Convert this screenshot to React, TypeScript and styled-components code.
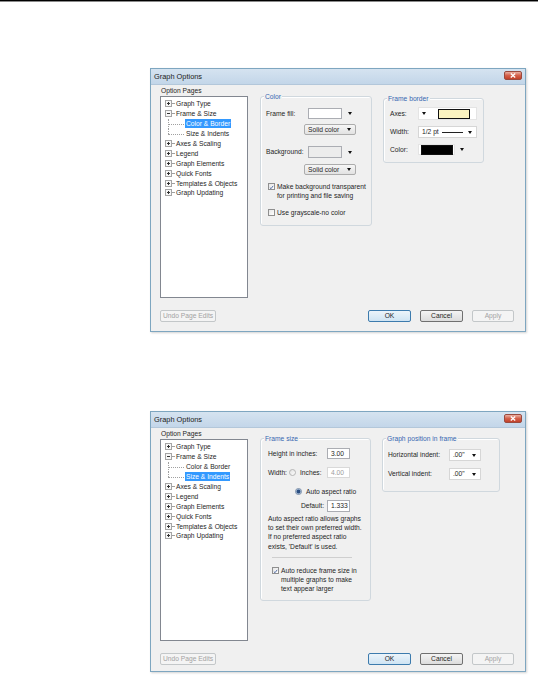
import React from "react";
import styled, { createGlobalStyle } from "styled-components";

const GlobalStyle = createGlobalStyle`
  html, body { margin: 0; padding: 0; background: #fff; }
  body { font-family: "Liberation Sans", Arial, sans-serif; }
  * { box-sizing: border-box; }
`;

const Page = styled.div`
  width: 538px;
  height: 675px;
  overflow: hidden;
`;

const TopRule = styled.div`
  height: 2px;
  border-top: 1px solid #000;
  border-bottom: 1px solid #8a8a8a;
`;

const Window = styled.div<{ $top: number; $height: number }>`
  margin: ${(p) => p.$top}px 0 0 150px;
  width: 376px;
  height: ${(p) => p.$height}px;
  display: flex;
  flex-direction: column;
  border: 1px solid #7ea6c0;
  background: #f0f0f0;
  box-shadow: 1px 1px 2px rgba(0, 0, 0, 0.18);
  font-size: 6.7px;
  line-height: 9.4px;
  color: #1e1e1e;
`;

const TitleBar = styled.div`
  height: 16px;
  flex: none;
  display: flex;
  justify-content: space-between;
  padding: 0 3px 0 3px;
  background: linear-gradient(#d5e3f0, #c3d6e9);
  border-bottom: 1px solid #b3c7da;
`;

const Title = styled.span`
  font-size: 7.4px;
  line-height: 16px;
  color: #1a1a1a;
`;

const CloseBox = styled.span`
  margin-top: 2px;
  width: 18px;
  height: 9px;
  border-radius: 2px;
  border: 1px solid #9a4a3e;
  background: linear-gradient(#eab0a2, #d4604a 50%, #c2412a);
  display: flex;
  align-items: center;
  justify-content: center;
`;

const Body = styled.div`
  flex: 1;
  min-height: 0;
  display: flex;
  padding: 1px 11px 0 9px;
`;

const LeftColumn = styled.div`
  width: 88px;
  flex: none;
  display: flex;
  flex-direction: column;
`;

const PagesLabel = styled.div`
  height: 10px;
  line-height: 10px;
  padding-left: 1px;
`;

const TreeBox = styled.div`
  flex: 1;
  background: #fff;
  border: 1px solid #828790;
  padding-top: 2px;
`;

const TreeRow = styled.div`
  height: 9.9px;
  display: flex;
  align-items: center;
  white-space: nowrap;
`;

const ExpanderBox = styled.span`
  margin-left: 4px;
  width: 7px;
  height: 7px;
  flex: none;
  display: flex;
`;

const Dash = styled.span`
  width: 2px;
  height: 0;
  border-top: 1px dotted #a0a0a0;
  margin-right: 1px;
`;

const Connector = styled.span<{ $last?: boolean }>`
  position: relative;
  margin-left: 7px;
  width: 17px;
  height: 100%;
  flex: none;

  &::before {
    content: "";
    position: absolute;
    left: 0;
    top: 0;
    height: ${(p) => (p.$last ? "50%" : "100%")};
    border-left: 1px dotted #a0a0a0;
  }

  &::after {
    content: "";
    position: absolute;
    left: 0;
    right: 1px;
    top: 50%;
    border-top: 1px dotted #a0a0a0;
  }
`;

const TreeLabel = styled.span<{ $selected?: boolean }>`
  padding: 0 1px;
  line-height: 9px;
  background: ${(p) => (p.$selected ? "#3399ff" : "transparent")};
  color: ${(p) => (p.$selected ? "#fff" : "#1e1e1e")};
`;

const RightArea = styled.div`
  flex: 1;
  display: flex;
  align-items: flex-start;
  gap: 11px;
  margin-left: 12px;
`;

const Group = styled.div<{ $top: number; $w: number; $h: number; $pad: number }>`
  position: relative;
  margin-top: ${(p) => p.$top}px;
  width: ${(p) => p.$w}px;
  height: ${(p) => p.$h}px;
  flex: none;
  border: 1px solid #d0d8de;
  border-radius: 3px;
  padding-left: ${(p) => p.$pad}px;
  box-shadow: inset 1px 1px 0 #fff;
`;

const Legend = styled.span`
  position: absolute;
  top: -5px;
  left: 3px;
  padding: 0 1px;
  background: #f0f0f0;
  color: #3767b0;
  line-height: 9px;
`;

const Row = styled.div<{ $mt: number; $h?: number }>`
  display: flex;
  align-items: center;
  margin-top: ${(p) => p.$mt}px;
  height: ${(p) => (p.$h ? `${p.$h}px` : "auto")};
  white-space: nowrap;
`;

const Label = styled.span<{ $w?: number; $right?: boolean }>`
  width: ${(p) => (p.$w ? `${p.$w}px` : "auto")};
  flex: none;
  text-align: ${(p) => (p.$right ? "right" : "left")};
  padding-right: ${(p) => (p.$right ? "3px" : "0")};
`;

const Swatch = styled.span<{ $w: number; $h: number; $bg: string }>`
  width: ${(p) => p.$w}px;
  height: ${(p) => p.$h}px;
  flex: none;
  background: ${(p) => p.$bg};
  border: 1px solid #abadb3;
`;

const Caret = styled.span<{ $ml?: number }>`
  margin-left: ${(p) => p.$ml ?? 0}px;
  width: 0;
  height: 0;
  flex: none;
  border-left: 2.5px solid transparent;
  border-right: 2.5px solid transparent;
  border-top: 3px solid #111;
`;

const Combo = styled.span<{ $ml?: number; $w: number; $h: number; $flat?: boolean }>`
  margin-left: ${(p) => p.$ml ?? 0}px;
  width: ${(p) => p.$w}px;
  height: ${(p) => p.$h}px;
  flex: none;
  display: flex;
  align-items: center;
  justify-content: space-between;
  padding: 0 4px 0 3px;
  border: 1px solid ${(p) => (p.$flat ? "#d6d6d6" : "#acacac")};
  border-radius: ${(p) => (p.$flat ? "0" : "2px")};
  background: ${(p) => (p.$flat ? "#fff" : "linear-gradient(#f6f6f6, #e2e2e2)")};
`;

const FieldWell = styled.span<{ $w: number; $h: number }>`
  width: ${(p) => p.$w}px;
  height: ${(p) => p.$h}px;
  flex: none;
  display: flex;
  align-items: center;
  background: #fff;
  border: 1px solid #e4e4e4;
  padding-left: 2px;
`;

const ColorChip = styled.span<{ $bg: string; $ml?: number }>`
  margin-left: ${(p) => p.$ml ?? 0}px;
  width: 32px;
  height: 10px;
  flex: none;
  background: ${(p) => p.$bg};
  border: 1px solid #111;
`;

const LineSample = styled.span`
  width: 21px;
  height: 0;
  border-top: 1px solid #222;
  margin-left: 3px;
  margin-right: auto;
`;

const TextInput = styled.span<{ $w: number; $h: number; $disabled?: boolean }>`
  width: ${(p) => p.$w}px;
  height: ${(p) => p.$h}px;
  flex: none;
  display: flex;
  align-items: center;
  padding-left: 3px;
  background: #fff;
  border: 1px solid ${(p) => (p.$disabled ? "#d9d9d9" : "#abadb3")};
  color: ${(p) => (p.$disabled ? "#9d9d9d" : "#1e1e1e")};
`;

const CheckBox = styled.span<{ $ml: number }>`
  margin: 1px 2px 0 ${(p) => p.$ml}px;
  width: 7px;
  height: 7px;
  flex: none;
  display: flex;
  border: 1px solid #8f8f8f;
  background: linear-gradient(135deg, #e6e6e6, #fff);
`;

const CheckRow = styled.div<{ $mt: number }>`
  display: flex;
  align-items: flex-start;
  margin-top: ${(p) => p.$mt}px;
`;

const Radio = styled.span<{ $ml: number; $on?: boolean }>`
  margin: 0 4px 0 ${(p) => p.$ml}px;
  width: 7px;
  height: 7px;
  flex: none;
  border-radius: 50%;
  border: 1px solid ${(p) => (p.$on ? "#7a8ea8" : "#b5b5b5")};
  background: ${(p) =>
    p.$on
      ? "radial-gradient(circle, #2b4f82 0 1.6px, #9fb6d3 2.2px, #eef3f8 3px)"
      : "linear-gradient(135deg, #e3e3e3, #fbfbfb)"};
`;

const Paragraph = styled.div<{ $mt: number }>`
  margin-top: ${(p) => p.$mt}px;
  line-height: 9.2px;
`;

const Separator = styled.div`
  margin: 6px 0 0 4px;
  width: 80px;
  height: 0;
  border-top: 1px solid #cfcfcf;
`;

const Footer = styled.div<{ $pb: number }>`
  flex: none;
  display: flex;
  align-items: center;
  gap: 9px;
  padding: 12px 11px ${(p) => p.$pb}px 9px;
`;

const Button = styled.span<{ $w: number; $kind?: "default" | "disabled" | "normal" }>`
  width: ${(p) => p.$w}px;
  height: 12px;
  flex: none;
  display: flex;
  align-items: center;
  justify-content: center;
  border-radius: 2px;
  line-height: 10px;
  border: 1px solid
    ${(p) => (p.$kind === "default" ? "#3d7bad" : p.$kind === "disabled" ? "#c3c7c9" : "#707070")};
  background: ${(p) =>
    p.$kind === "default"
      ? "linear-gradient(#ecf4fa, #cfe4f3)"
      : p.$kind === "disabled"
      ? "#f4f4f4"
      : "linear-gradient(#f4f4f4, #dcdcdc)"};
  color: ${(p) => (p.$kind === "disabled" ? "#a3a3a3" : "#1e1e1e")};
`;

const Spacer = styled.span`
  flex: 1;
`;

const CloseIcon = () => (
  <svg width="6" height="5" viewBox="0 0 6 5">
    <path d="M0.8 0.5 L5.2 4.5 M5.2 0.5 L0.8 4.5" stroke="#fff" strokeWidth="1.3" />
  </svg>
);

const Expander = ({ open }: { open?: boolean }) => (
  <ExpanderBox>
    <svg width="7" height="7" viewBox="0 0 7 7">
      <rect x="0.5" y="0.5" width="6" height="6" fill="#f7f7f7" stroke="#a5a5a5" />
      <path d="M2 3.5 H5" stroke="#333" />
      {!open && <path d="M3.5 2 V5" stroke="#333" />}
    </svg>
  </ExpanderBox>
);

const Tick = () => (
  <svg width="7" height="7" viewBox="0 0 7 7">
    <path d="M1.2 3.6 L2.8 5.2 L5.8 1.2" stroke="#3d5a98" strokeWidth="1.2" fill="none" />
  </svg>
);

type TreeItem = { label: string; kind: "closed" | "open" | "child"; last?: boolean };

const treeItems: TreeItem[] = [
  { label: "Graph Type", kind: "closed" },
  { label: "Frame & Size", kind: "open" },
  { label: "Color & Border", kind: "child" },
  { label: "Size & Indents", kind: "child", last: true },
  { label: "Axes & Scaling", kind: "closed" },
  { label: "Legend", kind: "closed" },
  { label: "Graph Elements", kind: "closed" },
  { label: "Quick Fonts", kind: "closed" },
  { label: "Templates & Objects", kind: "closed" },
  { label: "Graph Updating", kind: "closed" },
];

const Dialog = ({
  top,
  height,
  pb,
  selected,
  children,
}: {
  top: number;
  height: number;
  pb: number;
  selected: string;
  children: React.ReactNode;
}) => (
  <Window $top={top} $height={height}>
    <TitleBar>
      <Title>Graph Options</Title>
      <CloseBox>
        <CloseIcon />
      </CloseBox>
    </TitleBar>
    <Body>
      <LeftColumn>
        <PagesLabel>Option Pages</PagesLabel>
        <TreeBox>
          {treeItems.map((item) => (
            <TreeRow key={item.label}>
              {item.kind === "child" ? (
                <Connector $last={item.last} />
              ) : (
                <>
                  <Expander open={item.kind === "open"} />
                  <Dash />
                </>
              )}
              <TreeLabel $selected={item.label === selected}>{item.label}</TreeLabel>
            </TreeRow>
          ))}
        </TreeBox>
      </LeftColumn>
      <RightArea>{children}</RightArea>
    </Body>
    <Footer $pb={pb}>
      <Button $w={56} $kind="disabled">Undo Page Edits</Button>
      <Spacer />
      <Button $w={43} $kind="default">OK</Button>
      <Button $w={43}>Cancel</Button>
      <Button $w={42} $kind="disabled">Apply</Button>
    </Footer>
  </Window>
);

export default function App() {
  return (
    <Page>
      <GlobalStyle />
      <TopRule />

      <Dialog top={66} height={264} pb={9} selected="Color & Border">
        <Group $top={10} $w={112} $h={130} $pad={5}>
          <Legend>Color</Legend>
          <Row $mt={11} $h={11}>
            <Label $w={42}>Frame fill:</Label>
            <Swatch $w={34} $h={11} $bg="#fff" />
            <Caret $ml={6} />
          </Row>
          <Row $mt={5} $h={11}>
            <Combo $ml={38} $w={52} $h={11}>
              Solid color
              <Caret />
            </Combo>
          </Row>
          <Row $mt={11} $h={12}>
            <Label $w={42}>Background:</Label>
            <Swatch $w={34} $h={12} $bg="#ececec" />
            <Caret $ml={6} />
          </Row>
          <Row $mt={6} $h={11}>
            <Combo $ml={38} $w={52} $h={11}>
              Solid color
              <Caret />
            </Combo>
          </Row>
          <CheckRow $mt={7}>
            <CheckBox $ml={2}>
              <Tick />
            </CheckBox>
            <span>
              Make background transparent
              <br />
              for printing and file saving
            </span>
          </CheckRow>
          <CheckRow $mt={7}>
            <CheckBox $ml={2} />
            <span>Use grayscale-no color</span>
          </CheckRow>
        </Group>

        <Group $top={12} $w={101} $h={65} $pad={6}>
          <Legend>Frame border</Legend>
          <Row $mt={8} $h={13}>
            <Label $w={28}>Axes:</Label>
            <FieldWell $w={59} $h={13}>
              <Caret $ml={1} />
              <ColorChip $bg="#fbf3c0" $ml={12} />
            </FieldWell>
          </Row>
          <Row $mt={6} $h={12}>
            <Label $w={28}>Width:</Label>
            <Combo $w={59} $h={12} $flat>
              1/2 pt
              <LineSample />
              <Caret />
            </Combo>
          </Row>
          <Row $mt={6} $h={11}>
            <Label $w={28}>Color:</Label>
            <FieldWell $w={37} $h={11}>
              <ColorChip $bg="#000" />
            </FieldWell>
            <Caret $ml={5} />
          </Row>
        </Group>
      </Dialog>

      <Dialog top={79} height={261} pb={6} selected="Size & Indents">
        <Group $top={9} $w={111} $h={163} $pad={7}>
          <Legend>Frame size</Legend>
          <Row $mt={9} $h={11}>
            <Label $w={59}>Height in inches:</Label>
            <TextInput $w={23} $h={11}>3.00</TextInput>
          </Row>
          <Row $mt={8} $h={11}>
            <Label $w={21}>Width:</Label>
            <Radio $ml={0} />
            <Label $w={27}>Inches:</Label>
            <TextInput $w={23} $h={11} $disabled>
              4.00
            </TextInput>
          </Row>
          <Row $mt={9} $h={9}>
            <Radio $ml={27} $on />
            <span>Auto aspect ratio</span>
          </Row>
          <Row $mt={4} $h={12}>
            <Label $w={59} $right>
              Default:
            </Label>
            <TextInput $w={23} $h={12}>1.333</TextInput>
          </Row>
          <Paragraph $mt={2}>
            Auto aspect ratio allows graphs
            <br />
            to set their own preferred width.
            <br />
            If no preferred aspect ratio
            <br />
            exists, 'Default' is used.
          </Paragraph>
          <Separator />
          <CheckRow $mt={8}>
            <CheckBox $ml={4}>
              <Tick />
            </CheckBox>
            <Paragraph $mt={0}>
              Auto reduce frame size in
              <br />
              multiple graphs to make
              <br />
              text appear larger
            </Paragraph>
          </CheckRow>
        </Group>

        <Group $top={9} $w={118} $h={54} $pad={5}>
          <Legend>Graph position in frame</Legend>
          <Row $mt={10} $h={12}>
            <Label $w={61}>Horizontal indent:</Label>
            <Combo $w={32} $h={12} $flat>
              .00"
              <Caret />
            </Combo>
          </Row>
          <Row $mt={7} $h={12}>
            <Label $w={61}>Vertical indent:</Label>
            <Combo $w={32} $h={12} $flat>
              .00"
              <Caret />
            </Combo>
          </Row>
        </Group>
      </Dialog>
    </Page>
  );
}
